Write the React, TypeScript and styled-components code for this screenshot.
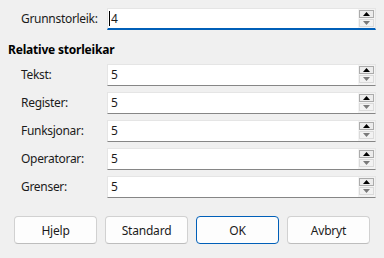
import React from 'react';
import styled, { createGlobalStyle } from 'styled-components';

const Global = createGlobalStyle`
  html, body { margin: 0; padding: 0; background: #f0f0f0; }
  body {
    font-family: "Noto Sans", "Liberation Sans", sans-serif;
    font-size: 12px;
    color: #1b1b1b;
  }
`;

const Dialog = styled.div`
  width: 384px;
  height: 258px;
  box-sizing: border-box;
  padding: 8px 8px 0 8px;
  display: flex;
  flex-direction: column;
`;

const FieldRow = styled.div`
  display: grid;
  grid-template-columns: 99px 269px;
  align-items: center;
  height: 22px;
`;

const Label = styled.label`
  padding-left: 13px;
  line-height: 16px;
  white-space: nowrap;
  letter-spacing: -0.3px;
`;

const SpinFrame = styled.div<{ $focused?: boolean }>`
  display: flex;
  height: 22px;
  box-sizing: border-box;
  background: #ffffff;
  border: 1px solid #e5e5e5;
  border-bottom: ${p => (p.$focused ? '2px solid #005fb8' : '1px solid #868686')};
`;

const Value = styled.div<{ $focused?: boolean }>`
  flex: 1;
  display: flex;
  align-items: center;
  padding-left: ${p => (p.$focused ? '1px' : '3px')};
  line-height: 16px;
`;

const Caret = styled.span`
  display: inline-block;
  width: 1px;
  height: 15px;
  background: #000;
  margin-right: 1px;
`;

const SpinCol = styled.div`
  width: 17px;
  display: flex;
  flex-direction: column;
  gap: 1px;
  padding: 1px 1px 0 1px;
  box-sizing: border-box;
  background: #f3f3f3;
`;

const SpinBtn = styled.div<{ $strong?: boolean }>`
  height: 8px;
  box-sizing: border-box;
  border: 1px solid ${p => (p.$strong ? '#ababab' : '#dadada')};
  background: ${p => (p.$strong ? '#ececec' : '#f2f2f2')};
  display: flex;
  align-items: center;
  justify-content: center;
`;

const Arrow = styled.svg`
  display: block;
`;

const SectionTitle = styled.div`
  font-weight: 700;
  line-height: 16px;
  margin: 12px 0 6px 0;
  color: #000;
  letter-spacing: -0.2px;
`;

const Rows = styled.div`
  display: flex;
  flex-direction: column;
  gap: 6px;
`;

const ButtonBar = styled.div`
  display: flex;
  gap: 8px;
  padding-left: 6px;
  margin-top: 18px;
`;

const Button = styled.button<{ $default?: boolean }>`
  width: 83px;
  height: 28px;
  box-sizing: border-box;
  border-radius: 4px;
  background: #fdfdfd;
  border: 1px solid ${p => (p.$default ? '#005fb8' : '#d1d1d1')};
  border-bottom-color: ${p => (p.$default ? '#005fb8' : '#bdbdbd')};
  font-family: inherit;
  font-size: 12px;
  letter-spacing: -0.2px;
  color: #1b1b1b;
  padding: 0;
`;

function SpinBox({ value, focused }: { value: string; focused?: boolean }) {
  return (
    <SpinFrame $focused={focused}>
      <Value $focused={focused}>
        {focused && <Caret />}
        {value}
      </Value>
      <SpinCol>
        <SpinBtn $strong>
          <Arrow width="7" height="4" viewBox="0 0 7 4">
            <path d="M0 4 L3.5 0 L7 4 Z" fill="#000" />
          </Arrow>
        </SpinBtn>
        <SpinBtn>
          <Arrow width="7" height="4" viewBox="0 0 7 4">
            <path d="M0 0 L7 0 L3.5 4 Z" fill="#7a7a7a" />
          </Arrow>
        </SpinBtn>
      </SpinCol>
    </SpinFrame>
  );
}

const rows = ['Tekst:', 'Register:', 'Funksjonar:', 'Operatorar:', 'Grenser:'];

export default function App() {
  return (
    <>
      <Global />
      <Dialog>
        <FieldRow>
          <Label>Grunnstorleik:</Label>
          <SpinBox value="4" focused />
        </FieldRow>
        <SectionTitle>Relative storleikar</SectionTitle>
        <Rows>
          {rows.map(r => (
            <FieldRow key={r}>
              <Label>{r}</Label>
              <SpinBox value="5" />
            </FieldRow>
          ))}
        </Rows>
        <ButtonBar>
          <Button>Hjelp</Button>
          <Button>Standard</Button>
          <Button $default>OK</Button>
          <Button>Avbryt</Button>
        </ButtonBar>
      </Dialog>
    </>
  );
}
